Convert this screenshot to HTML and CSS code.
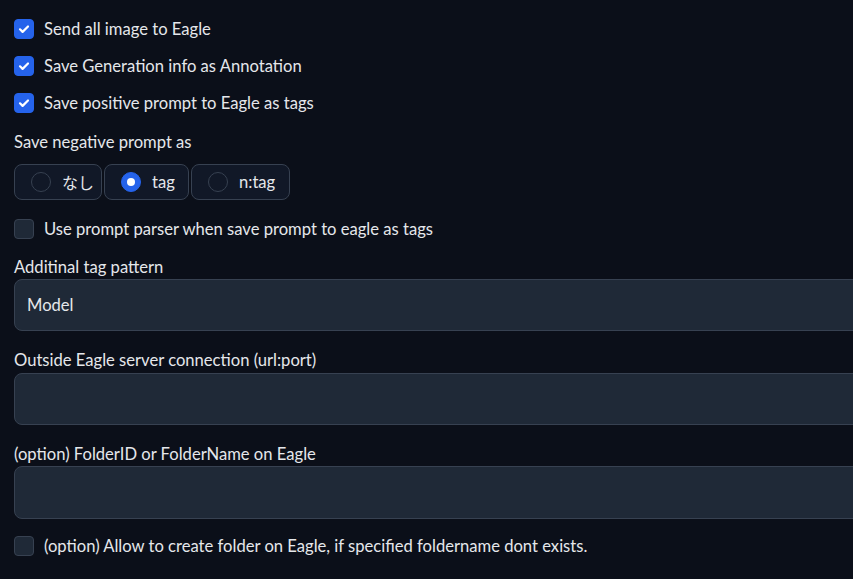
FILE: index.html
```html
<!DOCTYPE html>
<html>
<head>
<meta charset="utf-8">
<link rel="stylesheet" href="styles.css">
</head>
<body>
<div class="panel">
  <label class="check-row first"><span class="cb checked"><svg viewBox="0 0 20 20" width="20" height="20"><path d="M6 10.3l2.6 2.6L14 7.5" fill="none" stroke="#fff" stroke-width="2.2" stroke-linecap="round" stroke-linejoin="round"/></svg></span><span class="txt">Send all image to Eagle</span></label>
  <label class="check-row"><span class="cb checked"><svg viewBox="0 0 20 20" width="20" height="20"><path d="M6 10.3l2.6 2.6L14 7.5" fill="none" stroke="#fff" stroke-width="2.2" stroke-linecap="round" stroke-linejoin="round"/></svg></span><span class="txt">Save Generation info as Annotation</span></label>
  <label class="check-row"><span class="cb checked"><svg viewBox="0 0 20 20" width="20" height="20"><path d="M6 10.3l2.6 2.6L14 7.5" fill="none" stroke="#fff" stroke-width="2.2" stroke-linecap="round" stroke-linejoin="round"/></svg></span><span class="txt">Save positive prompt to Eagle as tags</span></label>

  <div class="field radio-field">
    <div class="label">Save negative prompt as</div>
    <div class="radios">
      <div class="radio-item item-nashi"><span class="rb"></span><span class="txt jp">なし</span></div>
      <div class="radio-item item-tag"><span class="rb on"></span><span class="txt">tag</span></div>
      <div class="radio-item item-ntag"><span class="rb"></span><span class="txt">n:tag</span></div>
    </div>
  </div>

  <label class="check-row parser"><span class="cb"></span><span class="txt">Use prompt parser when save prompt to eagle as tags</span></label>

  <div class="field tb-field tb1">
    <div class="label">Additinal tag pattern</div>
    <div class="textbox">Model</div>
  </div>
  <div class="field tb-field tb2">
    <div class="label">Outside Eagle server connection (url:port)</div>
    <div class="textbox"></div>
  </div>
  <div class="field tb-field tb3">
    <div class="label">(option) FolderID or FolderName on Eagle</div>
    <div class="textbox"></div>
  </div>

  <label class="check-row last"><span class="cb"></span><span class="txt">(option) Allow to create folder on Eagle, if specified foldername dont exists.</span></label>
</div>
</body>
</html>
```

FILE: styles.css
```css
html, body {
  margin: 0;
  padding: 0;
  background: #0b0f19;
  overflow: hidden;
}
body {
  font-family: Lato, "Noto Sans CJK JP", sans-serif;
  font-size: 16.6px;
  color: #e5e7eb;
  width: 853px;
  height: 579px;
}
.panel {
  display: flex;
  flex-direction: column;
  align-items: flex-start;
  padding: 18px 0 0 14px;
  width: 900px;
}
.check-row {
  display: flex;
  align-items: center;
  gap: 10px;
  height: 21px;
  margin-bottom: 16px;
  white-space: nowrap;
}
.cb {
  width: 20px;
  height: 20px;
  box-sizing: border-box;
  border-radius: 4px;
  background: #1f2937;
  border: 1px solid #374151;
  display: flex;
  flex: none;
}
.cb.checked {
  background: #2563eb;
  border-color: #2563eb;
}
.cb svg { display: block; margin: -1px; }
.txt { line-height: 20px; white-space: nowrap; }
.label {
  line-height: 20px;
  white-space: nowrap;
}
.radio-field { margin-top: 3px; }
.radio-field .label { margin-bottom: 12px; }
.radios {
  display: flex;
  gap: 2px;
}
.radio-item {
  display: flex;
  align-items: center;
  gap: 11px;
  height: 36px;
  box-sizing: border-box;
  padding: 0 12px 0 16px;
  border: 1px solid #374151;
  border-radius: 8px;
  background: #111827;
}
.item-nashi { width: 88px; }
.item-tag { width: 85px; }
.item-ntag { width: 99px; }
.rb {
  width: 20px;
  height: 20px;
  box-sizing: border-box;
  border-radius: 50%;
  border: 1px solid #374151;
  background: #111827;
  flex: none;
}
.rb.on {
  background: #2563eb;
  border-color: #2563eb;
  position: relative;
}
.rb.on::after {
  content: "";
  position: absolute;
  left: 5px; top: 5px;
  width: 8px; height: 8px;
  border-radius: 50%;
  background: #fff;
}
.jp { font-family: "Noto Sans CJK JP", sans-serif; font-size: 16px; }
.parser { margin-top: 18px; margin-bottom: 18px; }
.tb-field { margin-bottom: 19px; }
.tb-field .label { margin-bottom: 2px; }
.textbox {
  height: 52px;
  box-sizing: border-box;
  background: #1f2937;
  border: 1px solid #374151;
  border-radius: 8px;
  padding: 0 12px;
  display: flex;
  align-items: center;
  width: 880px;
}
.tb2 .label { margin-bottom: 3px; }
.tb3 .textbox { height: 53px; }
.tb3 { margin-bottom: 16px; }
.last { margin-bottom: 0; }
```
